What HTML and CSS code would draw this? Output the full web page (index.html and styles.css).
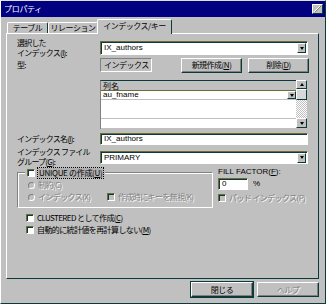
FILE: index.html
```html
<!DOCTYPE html>
<html lang="ja">
<head>
    <meta charset="UTF-8">
    <title>プロパティ</title>
    <link rel="stylesheet" href="styles.css">
</head>
<body>
<div class="window">
    <div class="titlebar">
        <span class="title">プロパティ</span>
        <span class="tb-btn"><svg width="7" height="6" viewBox="0 0 7 6"><path d="M0 6L6 0" stroke="#fff" stroke-width="1"/><path d="M1 6L7 0" stroke="#808080" stroke-width="1"/></svg></span>
    </div>
    <div class="tabs">
        <div class="tab t1">テーブル</div>
        <div class="tab t2">リレーション</div>
        <div class="tab active">インデックス/キー</div>
    </div>
    <div class="panel">
        <div class="row r-sel">
            <div class="label">選択した<br>インデックス(<u>I</u>):</div>
            <div class="field combo wide"><span class="val">IX_authors</span><span class="drop"></span></div>
        </div>
        <div class="row r-type">
            <div class="label">型:</div>
            <div class="field ro">インデックス</div>
            <div class="btn b-new">新規作成(<u>N</u>)</div>
            <div class="btn b-del">削除(<u>D</u>)</div>
        </div>
        <div class="row r-grid">
            <div class="label"></div>
            <div class="grid">
                <div class="cells">
                    <div class="head">列名</div>
                    <div class="cell c1"><span>au_fname</span><span class="drop small"></span></div>
                    <div class="cell c2"></div>
                    <div class="cell c3"></div>
                </div>
                <div class="vscroll">
                    <div class="sb-btn up"></div>
                    <div class="sb-thumb"></div>
                    <div class="sb-track"></div>
                    <div class="sb-btn down"></div>
                </div>
            </div>
        </div>
        <div class="row r-name">
            <div class="label">インデックス名(<u>I</u>):</div>
            <div class="field wide">IX_authors</div>
        </div>
        <div class="row r-fg">
            <div class="label">インデックス ファイル<br>グループ(<u>G</u>):</div>
            <div class="field combo wide fg"><span class="val">PRIMARY</span><span class="drop"></span></div>
        </div>
        <div class="options">
            <div class="group">
                <div class="legend"><span class="box"></span><span class="focus">UNIQUE の作成(<u>U</u>)</span></div>
                <div class="opt-row">
                    <span class="radio"></span><span class="dis">制約(C)</span>
                </div>
                <div class="opt-row">
                    <span class="radio"></span><span class="dis w-idx">インデックス(X)</span>
                    <span class="box off"></span><span class="dis">作成時にキーを無視(K)</span>
                </div>
            </div>
            <div class="fill">
                <div class="fill-label">FILL FACTOR(<u>F</u>):</div>
                <div class="fill-row"><div class="field num">0</div><span class="pct">%</span></div>
                <div class="opt-row"><span class="box off"></span><span class="dis">パッド インデックス(P)</span></div>
            </div>
        </div>
        <div class="checks">
            <div class="chk"><span class="box"></span><span>CLUSTERED として作成(<u>C</u>)</span></div>
            <div class="chk"><span class="box"></span><span>自動的に統計値を再計算しない(<u>M</u>)</span></div>
        </div>
    </div>
    <div class="footer">
        <div class="btn default">閉じる</div>
        <div class="btn disabled"><span class="dis">ヘルプ</span></div>
    </div>
</div>
</body>
</html>
```

FILE: styles.css
```css
body{
    margin:0;
    background:#c0c0c0;
    font:8px/10px "Noto Sans CJK JP","Liberation Sans",sans-serif;
    color:#000;
}
u{
    text-decoration:underline;
}
.window{
    width:326px;
    height:304px;
    box-sizing:border-box;
    border-left:1px solid #fff;
    border-top:1px solid #e0e0e0;
    border-right:1px solid #0c3a3a;
    border-bottom:1px solid #0c3a3a;
    background:#c0c0c0;
}
.titlebar{
    height:16px;
    background:#000080;
    color:#fff;
    display:flex;
    align-items:center;
    justify-content:space-between;
    padding:0 2px 0 3px;
}
.title{
    letter-spacing:-0.3px;
}
.tb-btn{
    width:9px;
    height:8px;
    background:#c0c0c0;
    border:1px solid;
    border-color:#fff #0c3a3a #0c3a3a #fff;
    display:flex;
    align-items:center;
    justify-content:center;
}
.tabs{
    display:flex;
    align-items:flex-end;
    height:16px;
    padding-left:6px;
}
.tab{
    box-sizing:border-box;
    height:11px;
    border:1px solid;
    border-color:#fff #0c3a3a transparent #fff;
    border-bottom:0;
    border-radius:2px 2px 0 0;
    text-align:center;
    line-height:10px;
    letter-spacing:-0.5px;
}
.tab.t1{
    width:41px;
}
.tab.t2{
    width:50px;
}
.tab.active{
    width:75px;
    height:15px;
    margin-left:-1px;
    margin-bottom:-1px;
    background:#c0c0c0;
    line-height:11px;
    position:relative;
    z-index:1;
}
.panel{
    box-sizing:border-box;
    margin-left:5px;
    width:313px;
    height:246px;
    border:1px solid;
    border-color:#fff #0c3a3a #0c3a3a #fff;
    padding:0 0 0 10px;
}
.row{
    display:flex;
}
.label{
    width:83px;
    flex:none;
    letter-spacing:-0.8px;
    line-height:9.5px;
}
.field{
    box-sizing:border-box;
    background:#fff;
    border-top:1px solid #6d6b38;
    border-left:1px solid #6d6b38;
    border-right:1px solid #fff;
    border-bottom:1px solid #fff;
    box-shadow:inset 1px 1px #0c3a3a;
    padding-left:3px;
    font-family:"Liberation Sans","Noto Sans CJK JP",sans-serif;
    display:flex;
    align-items:center;
}
.field.wide{
    width:208px;
}
.combo{
    justify-content:space-between;
    padding-right:1px;
}
.drop{
    width:9px;
    height:10px;
    box-sizing:border-box;
    background:#c0c0c0;
    border:1px solid;
    border-color:#fff #0c3a3a #0c3a3a #fff;
    display:flex;
    align-items:center;
    justify-content:center;
}
.drop::after,.sb-btn.down::after{
    content:"";
    border-left:2.5px solid transparent;
    border-right:2.5px solid transparent;
    border-top:3px solid #000;
}
.sb-btn.up::after{
    content:"";
    border-left:2.5px solid transparent;
    border-right:2.5px solid transparent;
    border-bottom:3px solid #000;
}
.r-sel{
    margin-top:3px;
    height:21px;
}
.r-sel .label{
    padding-top:1px;
}
.r-sel .combo{
    margin-top:4px;
    height:14px;
}
.r-type{
    height:14px;
    align-items:center;
}
.field.ro{
    width:52px;
    height:14px;
    background:#c0c0c0;
    border-color:#808080 #fff #fff #808080;
    box-shadow:none;
    font-family:"Noto Sans CJK JP",sans-serif;
    letter-spacing:-0.5px;
}
.btn{
    box-sizing:border-box;
    height:15px;
    background:#c0c0c0;
    border:1px solid;
    border-color:#fff #0c3a3a #0c3a3a #fff;
    box-shadow:inset -1px -1px #808080;
    display:flex;
    align-items:center;
    justify-content:center;
    letter-spacing:-0.5px;
}
.b-new{
    width:61px;
    margin-left:29px;
}
.b-del{
    width:61px;
    margin-left:6px;
}
.r-grid{
    margin-top:8px;
    height:49px;
}
.grid{
    display:flex;
}
.cells{
    width:196px;
    box-sizing:border-box;
    border-top:1px solid #0c3a3a;
    border-left:1px solid #808080;
    background:#fff;
}
.head{
    height:9px;
    background:#c0c0c0;
    border-bottom:1px solid #6d6b38;
    padding-left:2px;
    line-height:9px;
}
.cell{
    box-sizing:border-box;
    border-bottom:1px solid #c0c0c0;
    padding-left:2px;
    display:flex;
    justify-content:space-between;
    align-items:center;
    font-family:"Liberation Sans",sans-serif;
}
.cell.c1{
    height:9px;
}
.cell.c2{
    height:19px;
}
.cell.c3{
    height:10px;
}
.drop.small{
    width:9px;
    height:8px;
}
.vscroll{
    width:11px;
    display:flex;
    flex-direction:column;
}
.sb-btn{
    box-sizing:border-box;
    height:9px;
    background:#c0c0c0;
    border:1px solid;
    border-color:#fff #0c3a3a #0c3a3a #fff;
    display:flex;
    align-items:center;
    justify-content:center;
}
.sb-btn.down{
    height:10px;
}
.sb-thumb{
    box-sizing:border-box;
    height:11px;
    background:#d8d8d8;
    border:1px solid;
    border-color:#fff #0c3a3a #0c3a3a #fff;
}
.sb-track{
    height:18px;
    background:repeating-conic-gradient(#fff 0 25%,#c0c0c0 0 50%) 0 0/2px 2px;
}
.r-name{
    margin-top:4px;
    height:12px;
}
.r-name .label{
    line-height:12px;
}
.r-name .field{
    height:12px;
}
.r-fg{
    margin-top:2px;
    height:20px;
}
.r-fg .label{
    line-height:10px;
}
.field.fg{
    margin-top:4px;
    height:13px;
}
.options{
    display:flex;
}
.group{
    box-sizing:border-box;
    width:196px;
    height:36px;
    margin-top:5px;
    border:1px solid;
    border-color:#808080 #fff #fff #808080;
    box-shadow:1px 1px #fff inset;
    padding-left:10px;
}
.legend{
    display:flex;
    align-items:center;
    gap:3px;
    height:10px;
    margin:-5px 0 0 -3px;
    padding:0 2px;
    width:max-content;
    background:#c0c0c0;
}
.focus{
    outline:1px dotted #000;
    outline-offset:0;
    background:#b0b0b0;
    padding:0 1px;
    letter-spacing:-0.3px;
}
.box{
    box-sizing:border-box;
    width:8px;
    height:8px;
    flex:none;
    background:#fff;
    border-top:1px solid #6d6b38;
    border-left:1px solid #6d6b38;
    border-right:1px solid #fff;
    border-bottom:1px solid #fff;
    box-shadow:inset 1px 1px #0c3a3a;
}
.box.off{
    background:#c0c0c0;
}
.opt-row{
    display:flex;
    align-items:center;
    gap:3px;
    height:10px;
    margin-top:2px;
}
.group .opt-row + .opt-row{
    margin-top:2px;
}
.radio{
    box-sizing:border-box;
    width:7px;
    height:7px;
    border-radius:50%;
    border:1px solid;
    border-color:#808080 #fff #fff #808080;
    background:#c0c0c0;
    flex:none;
}
.dis{
    color:#808080;
    text-shadow:1px 1px #fff;
    letter-spacing:-0.6px;
}
.w-idx{
    width:66px;
}
.fill{
    margin-left:5px;
}
.fill-label{
    height:11px;
    font-family:"Liberation Sans",sans-serif;
}
.fill-row{
    display:flex;
    align-items:center;
    gap:5px;
}
.field.num{
    width:30px;
    height:12px;
}
.pct{
    font-family:"Liberation Sans",sans-serif;
}
.fill .opt-row{
    margin-top:3px;
}
.checks{
    margin-top:5px;
    padding-left:9px;
}
.chk{
    display:flex;
    align-items:center;
    gap:3px;
    height:10px;
    margin-bottom:2px;
    letter-spacing:-0.6px;
}
.footer{
    display:flex;
    justify-content:flex-end;
    gap:4px;
    margin-top:3px;
    padding-right:6px;
}
.footer .btn{
    width:62px;
}
.btn.default{
    outline:1px solid #0c3a3a;
    outline-offset:0;
}
```
